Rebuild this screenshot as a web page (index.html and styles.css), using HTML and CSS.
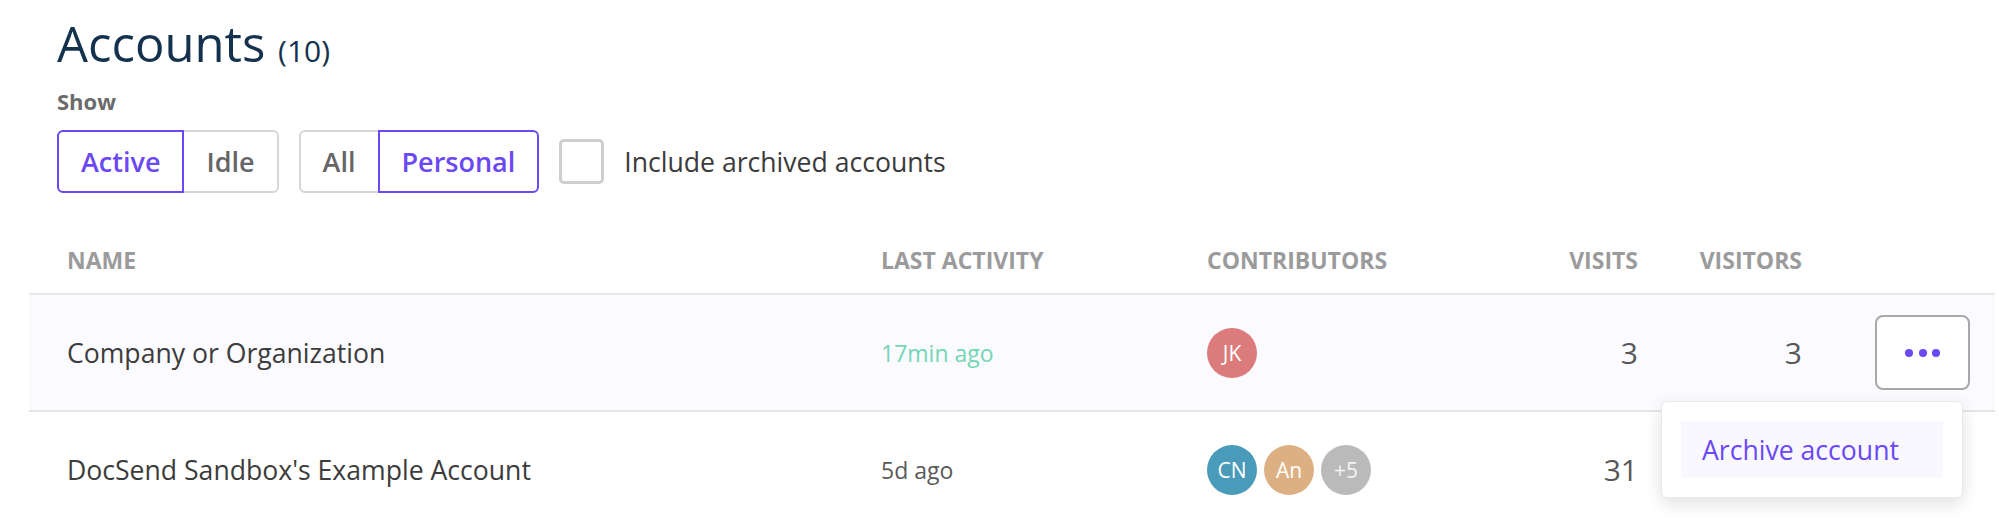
FILE: index.html
```html
<!DOCTYPE html>
<html lang="en">
<head>
<meta charset="utf-8">
<title>Accounts</title>
<link rel="stylesheet" href="styles.css">
</head>
<body>
<div class="page">
  <header class="page-head">
    <h1 class="title">Accounts <span class="count">(10)</span></h1>
    <div class="show-label">Show</div>
    <div class="filters">
      <div class="seg">
        <button class="seg-btn is-on">Active</button>
        <button class="seg-btn">Idle</button>
      </div>
      <div class="seg">
        <button class="seg-btn">All</button>
        <button class="seg-btn is-on">Personal</button>
      </div>
      <label class="check"><span class="box"></span><span>Include archived accounts</span></label>
    </div>
  </header>

  <div class="table">
    <div class="row head">
      <div class="cell name">NAME</div>
      <div class="cell">LAST ACTIVITY</div>
      <div class="cell">CONTRIBUTORS</div>
      <div class="cell num">VISITS</div>
      <div class="cell num">VISITORS</div>
      <div class="cell"></div>
    </div>

    <div class="row body hl">
      <div class="cell name">Company or Organization</div>
      <div class="cell time recent">17min ago</div>
      <div class="cell avatars">
        <span class="avatar a-jk">JK</span>
      </div>
      <div class="cell num value">3</div>
      <div class="cell num value">3</div>
      <div class="cell actions">
        <div class="menu-wrap">
          <button class="more"><span class="dot"></span><span class="dot"></span><span class="dot"></span></button>
          <div class="dropdown">
            <div class="dropdown-item">Archive account</div>
          </div>
        </div>
      </div>
    </div>

    <div class="row body">
      <div class="cell name">DocSend Sandbox's Example Account</div>
      <div class="cell time">5d ago</div>
      <div class="cell avatars">
        <span class="avatar a-cn">CN</span>
        <span class="avatar a-an">An</span>
        <span class="avatar a-more">+5</span>
      </div>
      <div class="cell num value">31</div>
      <div class="cell num value"></div>
      <div class="cell actions"></div>
    </div>
  </div>
</div>
</body>
</html>
```

FILE: styles.css
```css
html, body {
  margin: 0;
  padding: 0;
  overflow: hidden;
  background: #ffffff;
  font-family: "Open Sans", "Noto Sans", sans-serif;
}

.page {
  padding: 13px 4px 0 29px;
}

.page-head {
  padding-left: 28px;
}

.title {
  margin: 0;
  font-size: 49px;
  font-weight: 400;
  line-height: 60px;
  color: #14324d;
}

.count {
  font-size: 30px;
  line-height: 1;
}

.show-label {
  margin-top: 16px;
  font-size: 22px;
  font-weight: 700;
  line-height: 24px;
  color: #6b6b6b;
}

.filters {
  margin-top: 17px;
  display: flex;
  align-items: center;
  gap: 20px;
}

.seg {
  display: flex;
}

.seg-btn {
  font-family: "Open Sans", "Noto Sans", sans-serif;
  font-size: 27px;
  font-weight: 600;
  line-height: 1;
  height: 63px;
  padding: 0 22px;
  margin: 0;
  border: 2px solid #d6d6d6;
  background: #ffffff;
  color: #666666;
}

.seg-btn + .seg-btn {
  margin-left: -2px;
}

.seg-btn:first-child {
  border-radius: 6px 0 0 6px;
}

.seg-btn:last-child {
  border-radius: 0 6px 6px 0;
}

.seg-btn.is-on {
  border-color: #6a48f5;
  color: #6a48f5;
  position: relative;
  z-index: 1;
}

.check {
  display: flex;
  align-items: center;
  gap: 20px;
  font-size: 26.6px;
  color: #3b3b3b;
}

.box {
  width: 45px;
  height: 45px;
  box-sizing: border-box;
  border: 3px solid #cfcfcf;
  border-radius: 5px;
}

.table {
  margin-top: 34px;
}

.row {
  display: grid;
  grid-template-columns: 852px 326px 293px 138px 164px 1fr;
  align-items: center;
  border-bottom: 2px solid #e6e6e6;
}

.row.head {
  height: 66px;
  font-size: 23px;
  font-weight: 700;
  color: #9b9b9b;
}

.row.body {
  height: 115px;
  font-size: 26.6px;
  color: #3c3c3c;
}

.row.hl {
  background: #fbfaff;
}

.cell.name {
  padding-left: 38px;
}

.num {
  text-align: right;
}

.value {
  font-size: 30px;
  color: #575757;
}

.time {
  font-size: 23px;
  color: #5a5a5a;
}

.time.recent {
  color: #72d6b4;
}

.avatars {
  display: flex;
  gap: 7px;
}

.avatar {
  width: 50px;
  height: 50px;
  border-radius: 50%;
  display: flex;
  align-items: center;
  justify-content: center;
  font-size: 21px;
  color: #ffffff;
}

.a-jk { background: #db7b7b; }
.a-cn { background: #4a9bb9; }
.a-an { background: #ddb083; }
.a-more { background: #bababa; color: #f4f4f4; }

.actions {
  display: flex;
  justify-content: flex-end;
  padding-right: 25px;
}

.menu-wrap {
  position: relative;
}

.more {
  width: 95px;
  height: 75px;
  box-sizing: border-box;
  border: 2px solid #a8a8a8;
  border-radius: 8px;
  background: #ffffff;
  display: flex;
  align-items: center;
  justify-content: center;
  gap: 5.5px;
  padding: 0;
  margin: 0;
}

.dot {
  width: 8px;
  height: 8px;
  border-radius: 50%;
  background: #6a48f5;
}

.dropdown {
  position: absolute;
  top: calc(100% + 11px);
  right: 7px;
  width: 302px;
  box-sizing: border-box;
  padding: 19px;
  background: #ffffff;
  border: 1px solid #e8e8e8;
  border-radius: 6px;
  box-shadow: 0 6px 18px rgba(0, 0, 0, 0.12);
  z-index: 5;
}

.dropdown-item {
  height: 57px;
  display: flex;
  align-items: center;
  padding-left: 21px;
  background: #f9f8ff;
  font-size: 26.6px;
  color: #6a48f5;
}
```
